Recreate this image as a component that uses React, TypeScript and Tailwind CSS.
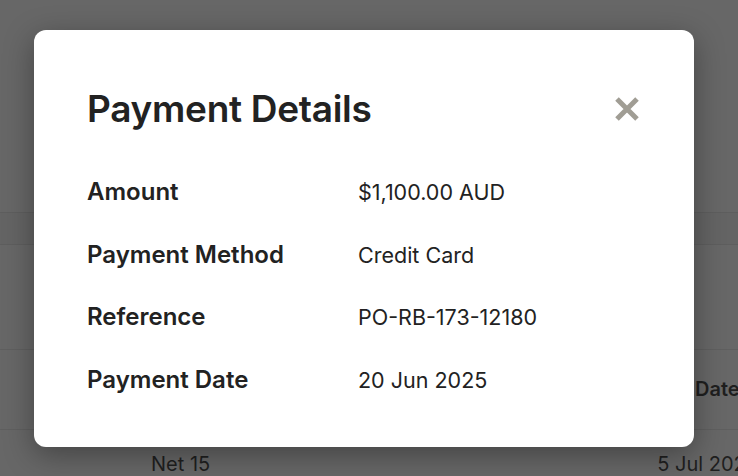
import React from "react";

const rows = [
  { label: "Amount", value: "$1,100.00 AUD" },
  { label: "Payment Method", value: "Credit Card" },
  { label: "Reference", value: "PO-RB-173-12180" },
  { label: "Payment Date", value: "20 Jun 2025" },
];

export default function App() {
  return (
    <div
      className="relative w-[738px] h-[476px] overflow-hidden bg-[#676767]"
      style={{ fontFamily: "Inter, 'Open Sans', sans-serif" }}
    >
      {/* background page (under overlay) */}
      <div className="flex flex-col w-full h-full">
        <div className="h-[212px] shrink-0" />
        <div className="h-[33px] shrink-0 border-t border-b border-[#5e5e5e] bg-[#646464]" />
        <div className="h-[105px] shrink-0 border-b border-[#5f5f5f]" />
        <div className="h-[80px] shrink-0 border-b border-[#5f5f5f] flex items-end justify-end pb-[25px]">
          <span className="text-[20px] font-semibold text-[#1f1f1f] w-[43px] overflow-hidden whitespace-nowrap">Date</span>
        </div>
        <div className="flex items-start pt-[20px] text-[20px] leading-[28px] text-[#1f1f1f] whitespace-nowrap">
          <span className="ml-[151px]">Net 15</span>
          <span className="ml-[447px]">5 Jul 2025</span>
        </div>
      </div>

      {/* modal */}
      <div className="absolute left-[34px] top-[30px] w-[660px] h-[417px] bg-white rounded-[12px] shadow-[0_8px_30px_rgba(0,0,0,0.35)] px-[53px] pt-[55px] text-[#222222]">
        <div className="flex items-center justify-between">
          <h2 className="text-[37px] leading-[48px] font-semibold tracking-[-0.3px]">Payment Details</h2>
          <button className="w-[30px] h-[30px] flex items-center justify-center mr-[-1px]">
            <svg width="26" height="26" viewBox="0 0 26 26">
              <path d="M3 3 L23 23 M23 3 L3 23" stroke="#a09d94" strokeWidth="5" strokeLinecap="butt" />
            </svg>
          </button>
        </div>
        <div className="mt-[28px] flex flex-col">
          {rows.map((r) => (
            <div key={r.label} className="flex items-center h-[62.5px]">
              <div className="w-[271px] text-[24px] font-semibold tracking-[0px]">{r.label}</div>
              <div className="text-[21.5px]">{r.value}</div>
            </div>
          ))}
        </div>
      </div>
    </div>
  );
}
